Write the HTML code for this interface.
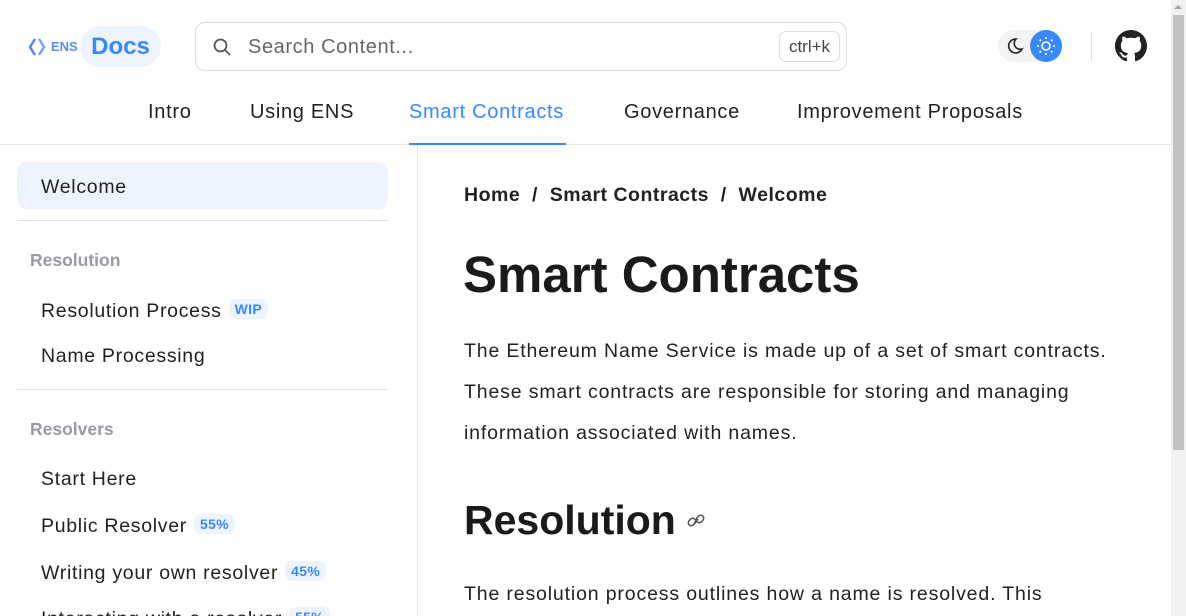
<!DOCTYPE html>
<html><head><meta charset="utf-8"><style>
*{box-sizing:border-box;margin:0;padding:0}
html,body{overflow:hidden}
body{width:1186px;height:616px;background:#fff;font-family:"Liberation Sans",sans-serif;color:#1f1f1f;position:relative}
.abs{position:absolute}
.top{position:absolute;left:0;top:0;width:1171px;height:145px;border-bottom:1px solid #e5e5e5}
.nav a{position:absolute;top:101px;font-size:20px;color:#222;white-space:nowrap;letter-spacing:0.7px}
.side{position:absolute;left:0;top:145px;width:418px;height:471px;border-right:1px solid #e5e5e5;overflow:hidden}
.item{position:absolute;left:41px;font-size:19.5px;color:#222;white-space:nowrap;letter-spacing:0.7px}
.cat{position:absolute;left:30px;font-size:17.5px;color:#9a9aa2;font-weight:bold}
.badge{display:inline-block;background:#eef4ff;color:#3889ff;font-weight:bold;font-size:14px;padding:2px 6px;border-radius:7px;margin-left:7px;vertical-align:3px;letter-spacing:0.3px}
.hr{position:absolute;left:17px;width:371px;height:1px;background:#e2e2e2}
.p{position:absolute;left:464px;font-size:19.5px;line-height:41px;color:#222;width:660px;letter-spacing:0.85px}
</style></head><body>
<div class="top">
  <svg class="abs" style="left:28px;top:37px" width="18" height="20" viewBox="0 0 18 20"><path d="M7 2 L2 10 L7 18" fill="none" stroke="#5b83f0" stroke-width="2.5"/><path d="M11 2 L16 10 L11 18" fill="none" stroke="#7aa0f8" stroke-width="2.5"/></svg>
  <div class="abs" style="left:51px;top:39px;font-size:13px;font-weight:bold;color:#5b8cf5">ENS</div>
  <div class="abs" style="left:80px;top:26px;width:81px;height:41px;border-radius:21px;background:#eef4ff;color:#3889ff;font-weight:bold;font-size:24px;text-align:center;line-height:41px">Docs</div>
  <div class="abs" style="left:195px;top:22px;width:652px;height:49px;border:1px solid #ddd;border-radius:10px"></div>
  <svg class="abs" style="left:212px;top:37px" width="20" height="20" viewBox="0 0 20 20"><circle cx="8.5" cy="8.5" r="6" fill="none" stroke="#555" stroke-width="1.8"/><path d="M13 13 L18 18" stroke="#555" stroke-width="1.8"/></svg>
  <div class="abs" style="left:248px;top:36px;font-size:20px;color:#666;letter-spacing:0.6px">Search Content...</div>
  <div class="abs" style="left:779px;top:31px;width:61px;height:31px;border:1px solid #ddd;border-radius:7px;font-size:17px;color:#444;text-align:center;line-height:29px">ctrl+k</div>
  <div class="abs" style="left:998px;top:30px;width:64px;height:32px;border-radius:16px;background:#f3f3f3"></div>
  <svg class="abs" style="left:1004px;top:36px" width="20" height="20" viewBox="0 0 20 20"><path d="M12 3 A7 7 0 1 0 18 13 A6 6 0 0 1 12 3 Z" fill="none" stroke="#222" stroke-width="1.6"/></svg>
  <div class="abs" style="left:1030px;top:30px;width:32px;height:32px;border-radius:16px;background:#3889ff"></div>
  <svg class="abs" style="left:1034px;top:34px" width="24" height="24" viewBox="0 0 24 24" stroke="#fff" stroke-width="1.6" fill="none"><circle cx="12" cy="12" r="4"/><path d="M12 3v2M12 19v2M3 12h2M19 12h2M5.6 5.6l1.4 1.4M17 17l1.4 1.4M5.6 18.4L7 17M17 7l1.4-1.4"/></svg>
  <div class="abs" style="left:1091px;top:32px;width:1px;height:29px;background:#e2e2e2"></div>
  <svg class="abs" style="left:1115px;top:30px" width="32" height="32" viewBox="0 0 16 16"><path fill="#222" d="M8 0C3.58 0 0 3.58 0 8c0 3.540 2.29 6.53 5.47 7.59.4.07.55-.17.55-.38 0-.19-.01-.82-.01-1.49-2.01.37-2.530-.49-2.69-.94-.09-.23-.48-.94-.82-1.13-.28-.15-.68-.52-.01-.53.63-.01 1.08.58 1.230.82.72 1.21 1.870.87 2.330.66.07-.52.28-.87.51-1.07-1.78-.2-3.64-.89-3.64-3.95 0-.87.31-1.59.82-2.150-.08-.2-.36-1.02.08-2.12 0 0 .67-.21 2.2.82.64-.18 1.32-.27 2-.27.68 0 1.36.09 2 .27 1.53-1.04 2.2-.82 2.2-.82.44 1.1.16 1.92.08 2.12.51.56.82 1.27.82 2.15 0 3.07-1.87 3.75-3.65 3.95.29.25.54.73.54 1.48 0 1.07-.01 1.93-.01 2.2 0 .21.15.46.55.38A8.013 8.013 0 0016 8c0-4.42-3.58-8-8-8z"/></svg>
  <div class="nav">
    <a style="left:148px">Intro</a>
    <a style="left:250px">Using ENS</a>
    <a style="left:409px;color:#3889ff">Smart Contracts</a>
    <a style="left:624px">Governance</a>
    <a style="left:797px">Improvement Proposals</a>
  </div>
  <div class="abs" style="left:409px;top:143px;width:157px;height:2px;background:#3889ff"></div>
</div>
<div class="side">
  <div class="abs" style="left:17px;top:17px;width:371px;height:47px;border-radius:10px;background:#eef4ff"></div>
  <div class="item" style="top:31px">Welcome</div>
  <div class="hr" style="top:75px"></div>
  <div class="cat" style="top:105px">Resolution</div>
  <div class="item" style="top:154px">Resolution Process<span class="badge">WIP</span></div>
  <div class="item" style="top:200px">Name Processing</div>
  <div class="hr" style="top:244px"></div>
  <div class="cat" style="top:274px">Resolvers</div>
  <div class="item" style="top:323px">Start Here</div>
  <div class="item" style="top:369px">Public Resolver<span class="badge">55%</span></div>
  <div class="item" style="top:416px">Writing your own resolver<span class="badge">45%</span></div>
  <div class="item" style="top:462px">Interacting with a resolver<span class="badge">55%</span></div>
</div>
<div class="abs" style="left:464px;top:184px;font-size:19.5px;font-weight:bold;color:#222;letter-spacing:0.5px;white-space:nowrap">Home &nbsp;/&nbsp; Smart Contracts &nbsp;/&nbsp; Welcome</div>
<div class="abs" style="left:463px;top:245px;font-size:51px;font-weight:bold;color:#1a1a1a">Smart Contracts</div>
<div class="p" style="top:331px">The Ethereum Name Service is made up of a set of smart contracts. These smart contracts are responsible for storing and managing information associated with names.</div>
<div class="abs" style="left:464px;top:497px;font-size:41px;font-weight:bold;color:#1a1a1a">Resolution</div>
<svg class="abs" style="left:686px;top:511px" width="20" height="20" viewBox="0 0 20 20" fill="none" stroke="#555" stroke-width="1.5"><path d="M8 12 L12 8"/><rect x="2" y="8" width="8" height="6" rx="3" transform="rotate(-45 6 11)"/><rect x="10" y="5" width="8" height="6" rx="3" transform="rotate(-45 14 8)"/></svg>
<div class="p" style="top:574px">The resolution process outlines how a name is resolved. This</div>
<div class="abs" style="left:1171px;top:0;width:15px;height:616px;background:#f1f1f1"></div>
<div class="abs" style="left:1173px;top:15px;width:11px;height:435px;background:#c1c1c1"></div>
<div class="abs" style="left:1174px;top:5px;width:0;height:0;border-left:4px solid transparent;border-right:4px solid transparent;border-bottom:4px solid #a3a3a3"></div>
</body></html>
